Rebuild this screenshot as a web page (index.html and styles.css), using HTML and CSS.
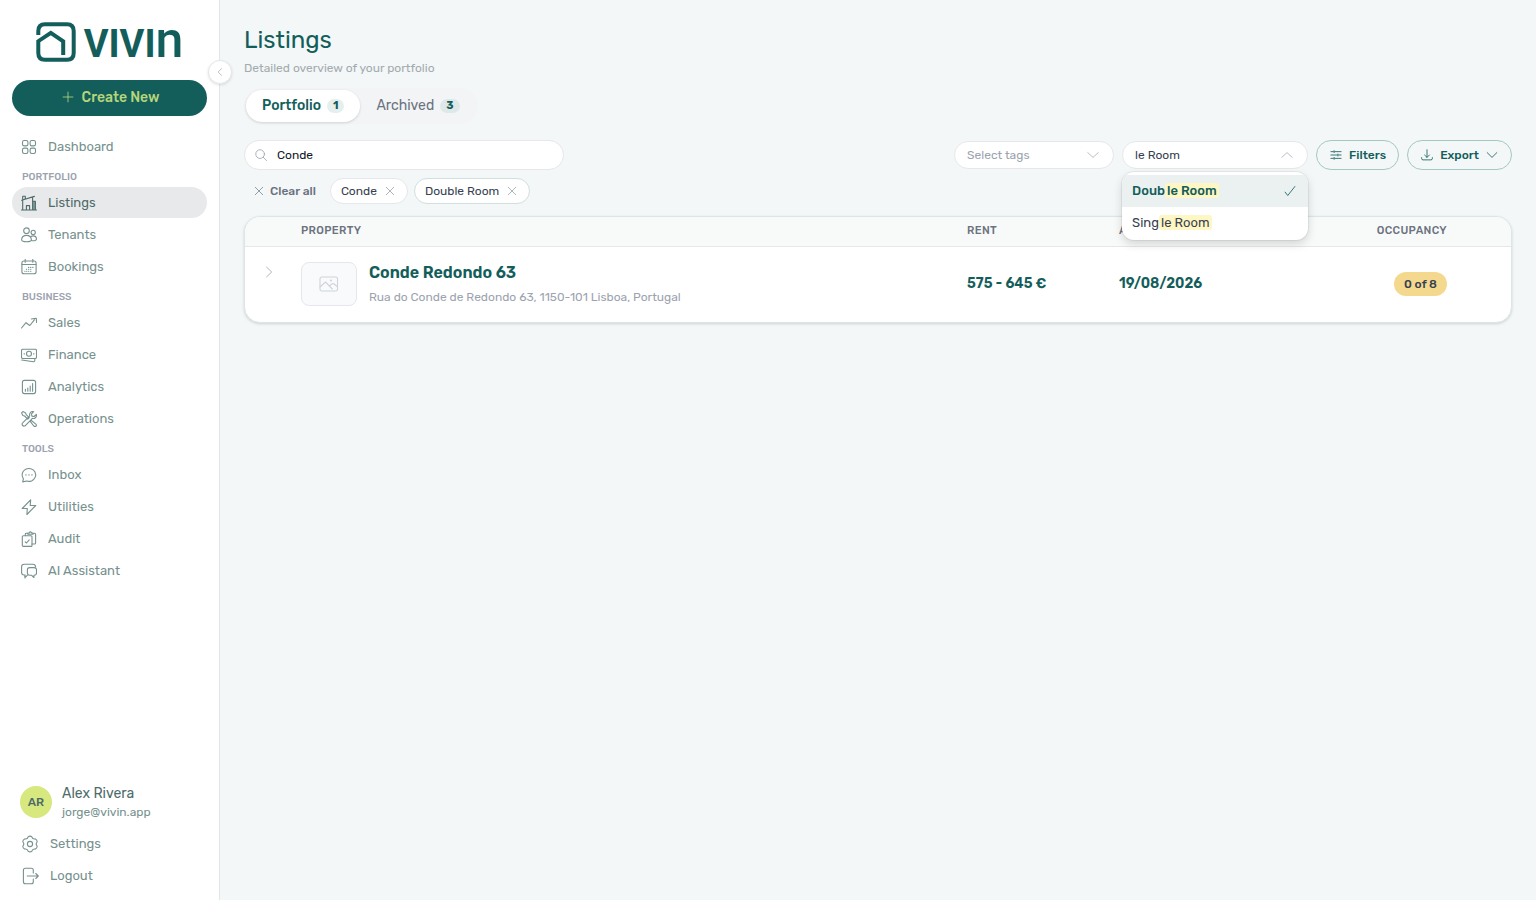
FILE: index.html
```html
<!DOCTYPE html>
<html lang="en">
<head>
  <meta charset="utf-8">
  <meta name="viewport" content="width=device-width, initial-scale=1">
  <title>Listings - Vivin</title>
  <link rel="stylesheet" href="styles.css">
</head>
<body>
  <div class="app">
    <!-- Sidebar -->
    <aside class="sidebar">
      <a class="logo" href="#">
        <svg class="logo-mark" viewBox="0 0 40 40" aria-hidden="true">
          <path d="M2.3 13V9Q2.3 2.3 9 2.3H31Q37.7 2.3 37.7 9V31Q37.7 37.7 31 37.7H9Q2.3 37.7 2.3 31V19.2L14.8 10.8L27.2 19.4V33"/>
        </svg>
        <span class="logo-text">VIVI<span class="logo-n">n</span></span>
      </a>
      <button class="collapse-button" aria-label="Collapse sidebar">
        <svg class="icon icon-xs" viewBox="0 0 16 16"><path d="M10.5 2.5L5 8l5.5 5.5"/></svg>
      </button>

      <button class="create-button">
        <svg class="icon icon-sm" viewBox="0 0 16 16"><path d="M8 1.5v13M1.5 8h13"/></svg>
        Create New
      </button>

      <nav class="nav">
        <a class="nav-item" href="#">
          <svg class="icon" viewBox="0 0 16 16"><rect x="1.5" y="1.5" width="5.4" height="5.4" rx="1.7"/><rect x="9.1" y="1.5" width="5.4" height="5.4" rx="1.7"/><rect x="1.5" y="9.1" width="5.4" height="5.4" rx="1.7"/><rect x="9.1" y="9.1" width="5.4" height="5.4" rx="1.7"/></svg>
          Dashboard
        </a>
        <div class="nav-label">Portfolio</div>
        <a class="nav-item active" href="#">
          <svg class="icon" viewBox="0 0 16 16"><path d="M.5 15h15M1.7 15V4.8M.6 5.3L13.4 1.4M1.7 4.8V1.2h2.6v2.8M11.6 15V2.2M11.6 6.3h2.8V15M13 6.5V15M5.4 15v-4.4h3.2V15"/></svg>
          Listings
        </a>
        <a class="nav-item" href="#">
          <svg class="icon" viewBox="0 0 16 16"><circle cx="5.5" cy="3.7" r="2.8"/><circle cx="12.2" cy="5.4" r="2.1"/><path d="M.6 12.7C.8 10 2.8 8.4 5.5 8.4s4.7 1.6 4.9 4.3c0 1.3-2.1 2-4.9 2s-4.9-.7-4.9-2zM9.9 9.7c.6-.5 1.4-.8 2.3-.8 1.9 0 3.2 1.2 3.3 3.1 0 1.3-1.8 1.9-4.6 1.7"/></svg>
          Tenants
        </a>
        <a class="nav-item" href="#">
          <svg class="icon" viewBox="0 0 16 16"><rect x=".9" y="2" width="14.2" height="12.8" rx="2"/><path d="M1 5.5h14M4.2.5v2.7M11.8.5v2.7M7.5 8.4h.3M9.6 8.4h.3M11.7 8.4h.3M5.4 10.3h.3M7.5 10.3h.3M9.6 10.3h.3M3.8 12.2h.3M5.6 12.2h.3M7.5 12.2h.3M9.6 12.2h.3"/></svg>
          Bookings
        </a>

        <div class="nav-label">Business</div>
        <a class="nav-item" href="#">
          <svg class="icon" viewBox="0 0 16 16"><path d="M.5 13L5 7.7l3.4 2.6q.5.3.9-.3L13.5 4.6M10.3 4l5-.7.3 4.2"/></svg>
          Sales
        </a>
        <a class="nav-item" href="#">
          <svg class="icon" viewBox="0 0 16 16"><rect x=".5" y="2.2" width="15" height="9.3" rx="1.3"/><circle cx="8" cy="6.8" r="2.5"/><path d="M3.2 6.5v.6M12.8 6.5v.6M.7 13l11.8 1.7q1.3.1 1.3-1.4v-1.6"/></svg>
          Finance
        </a>
        <a class="nav-item" href="#">
          <svg class="icon" viewBox="0 0 16 16"><rect x="1.4" y="1.4" width="13.2" height="13.2" rx="2"/><path d="M4.4 12.2v-1.8M6.8 12.2V9M9.2 12.2V7M11.6 12.2V4.6"/></svg>
          Analytics
        </a>
        <a class="nav-item" href="#">
          <svg class="icon" viewBox="0 0 16 16"><path d="M.6 1.9L1.9.6l2.7 1.3.6 1.7 3.1 3.1-1.5 1.5-3.2-3.2-1.7-.6zM10 9.3l4.9 3.8q1 1.3 0 2.1-1 .8-2.1-.2L9 10.2zM12.7.7L10.5 2.9l.4 2.2 2.2.4 2.2-2.2c.7 2.5-1.3 4.7-3.9 4.1L4.6 14.3c-.8.9-2 1.1-2.9.2s-.8-2.1.2-2.9l6.8-6.8C8.1 2.1 10.3 0 12.7.7z"/></svg>
          Operations
        </a>

        <div class="nav-label">Tools</div>
        <a class="nav-item" href="#">
          <svg class="icon" viewBox="0 0 16 16"><path d="M2.4 11.9C.1 8.6.9 4.4 4.3 2.4 7.7.5 12.2 1.5 14 4.9c1.7 3.5.1 7.5-3.5 9-1.6.6-3.2.6-4.7.1L1.7 14.9zM4.8 7.9h.3M7.8 7.9h.3M10.8 7.9h.3"/></svg>
          Inbox
        </a>
        <a class="nav-item" href="#">
          <svg class="icon" viewBox="0 0 16 16"><path d="M9.7.8L1.2 9.5h5.1L5.9 15.5 14.7 6.5H9.2z"/></svg>
          Utilities
        </a>
        <a class="nav-item" href="#">
          <svg class="icon" viewBox="0 0 16 16"><rect x="1.3" y="4.7" width="9.7" height="10.7" rx="1"/><path d="M4.3 4.6V3.2q0-.9.9-.9h1.5M12 2.3h1.5q1.1 0 1.1 1v8.7q0 1-1.1 1h-2.4M6.8 3.3V2h1.3q1.3-2.2 2.6 0H12v1.3zM4.2 10.8l1.3 1.2 2.7-3.2"/></svg>
          Audit
        </a>
        <a class="nav-item" href="#">
          <svg class="icon" viewBox="0 0 16 16"><path d="M3.9 14.9v-2.6M4.3 12H3Q.6 12 .6 9.6V4Q.6 1.2 3.2 1.2h8.7q2.5 0 2.7 2.7M3.9 14.5l2.4-2.2"/><path d="M8.6 4.6h4.6q2.3 0 2.3 2.2v3.2q0 2.2-2.3 2.2h-.3v2.3l-2.5-2.3H8.6q-2.2 0-2.2-2.2V6.8q0-2.2 2.2-2.2z"/></svg>
          AI Assistant
        </a>
      </nav>

      <div class="account">
        <div class="user">
          <div class="avatar">AR</div>
          <div class="user-details">
            <div class="user-name">Alex Rivera</div>
            <div class="user-email">jorge@vivin.app</div>
          </div>
        </div>
        <a class="nav-item" href="#">
          <svg class="icon icon-lg" viewBox="0 0 18 18"><circle cx="9" cy="9" r="2.6"/><path d="M7.2 1.8Q9 .4 10.8 1.8Q11.6 4.4 14.3 3.9Q16.4 4.7 16.1 7Q14.3 9 16.1 11Q16.4 13.3 14.3 14.1Q11.6 13.6 10.8 16.2Q9 17.6 7.2 16.2Q6.4 13.6 3.7 14.1Q1.6 13.3 1.9 11Q3.7 9 1.9 7Q1.6 4.7 3.7 3.9Q6.4 4.4 7.2 1.8z"/></svg>
          Settings
        </a>
        <a class="nav-item" href="#">
          <svg class="icon icon-lg" viewBox="0 0 18 18"><path d="M12.3 6V3.2q0-2-2-2H4.4q-2 0-2 2v11.6q0 2 2 2h5.900q2 0 2-2V12M6.3 9h11M14.8 6.5L17.3 9l-2.5 2.5"/></svg>
          Logout
        </a>
      </div>
    </aside>

    <!-- Main content -->
    <main class="main">
      <h1 class="title">Listings</h1>
      <p class="subtitle">Detailed overview of your portfolio</p>

      <div class="tabs">
        <button class="tab active">Portfolio <span class="count">1</span></button>
        <button class="tab">Archived <span class="count">3</span></button>
      </div>

      <div class="toolbar">
        <label class="search">
          <svg class="icon icon-sm" viewBox="0 0 16 16"><circle cx="6.8" cy="6.8" r="5.8"/><path d="M11 11l4.5 4.5"/></svg>
          <input type="text" value="Conde" aria-label="Search listings">
        </label>

        <div class="toolbar-actions">
          <div class="field field-tags">
            <select aria-label="Tags">
              <option>Select tags</option>
            </select>
            <svg class="icon icon-sm" viewBox="0 0 16 16"><path d="M1 4.8l7 6.4 7-6.4"/></svg>
          </div>

          <div class="field field-type">
            <input type="text" value="le Room" aria-label="Room type">
            <svg class="icon icon-sm" viewBox="0 0 16 16"><path d="M1 11.2l7-6.4 7 6.4"/></svg>
            <div class="menu">
              <button class="option selected">
                <span>Doub<mark>le Room</mark></span>
                <svg class="icon icon-sm" viewBox="0 0 16 16"><path d="M1.5 9.5L5 14 14.5 2"/></svg>
              </button>
              <button class="option"><span>Sing<mark>le Room</mark></span></button>
            </div>
          </div>

          <button class="button-outline">
            <svg class="icon icon-sm" viewBox="0 0 16 16"><path d="M1.2 3.5h3.3M6.5 3.5h8.3M1.2 8h8.3M11.5 8h3.3M1.2 12.5h3.3M6.5 12.5h8.3M5.5 2.2v2.6M10.5 6.7v2.6M5.5 11.2v2.6"/></svg>
            Filters
          </button>
          <button class="button-outline button-menu">
            <svg class="icon icon-sm" viewBox="0 0 16 16"><path d="M8 1v10M4.8 8L8 11.2 11.2 8M.8 11.5v1q0 2 2 2h10.4q2 0 2-2v-1"/></svg>
            Export
            <svg class="icon icon-sm" viewBox="0 0 16 16"><path d="M1.5 4.8L8 11.2l6.5-6.4"/></svg>
          </button>
        </div>
      </div>

      <div class="chips">
        <button class="clear-button">
          <svg class="icon icon-xs" viewBox="0 0 16 16"><path d="M2 2l12 12M14 2L2 14"/></svg>
          Clear all
        </button>
        <button class="chip">
          Conde
          <svg class="icon icon-xs" viewBox="0 0 16 16"><path d="M2 2l12 12M14 2L2 14"/></svg>
        </button>
        <button class="chip chip-filter">
          Double Room
          <svg class="icon icon-xs" viewBox="0 0 16 16"><path d="M2 2l12 12M14 2L2 14"/></svg>
        </button>
      </div>

      <div class="card">
        <table class="listings">
          <thead>
            <tr>
              <th class="col-toggle"></th>
              <th>Property</th>
              <th class="col-rent">Rent</th>
              <th class="col-date">Availability</th>
              <th class="col-occupancy">Occupancy</th>
              <th class="col-actions"></th>
            </tr>
          </thead>
          <tbody>
            <tr>
              <td class="col-toggle">
                <button class="expand-button" aria-label="Expand property">
                  <svg class="icon icon-sm" viewBox="0 0 16 16"><path d="M4.8 1.5L11.5 8l-6.7 6.5"/></svg>
                </button>
              </td>
              <td>
                <div class="property">
                  <div class="thumb">
                    <svg class="icon" viewBox="0 0 20 16"><rect x="1" y="1" width="17.5" height="14" rx="1.8"/><path d="M1 11l5.5-5 6.8 7M10.5 10.2q2-3.2 4.2-2.4l3.8 3"/><circle cx="12" cy="4.5" r=".5"/></svg>
                  </div>
                  <div>
                    <a class="property-name" href="#">Conde Redondo 63</a>
                    <div class="property-address">Rua do Conde de Redondo 63, 1150-101 Lisboa, Portugal</div>
                  </div>
                </div>
              </td>
              <td class="value">575 - 645 €</td>
              <td class="value">19/08/2026</td>
              <td class="col-occupancy"><span class="badge">0 of 8</span></td>
              <td></td>
            </tr>
          </tbody>
        </table>
      </div>
    </main>
  </div>
</body>
</html>
```

FILE: styles.css
```css
* {
  box-sizing: border-box;
}
body {
  margin: 0;
  font-family: Rubik, Roboto, sans-serif;
  font-size: 13px;
  color: #374151;
  background-color: #f3f7f8;
}
a {
  color: inherit;
  text-decoration: none;
}
button,
input,
select {
  font: inherit;
  color: inherit;
  border: none;
  background: none;
  padding: 0;
  margin: 0;
  outline: none;
}
button {
  cursor: pointer;
}
.icon {
  width: 16px;
  height: 16px;
  flex-shrink: 0;
  fill: none;
  stroke: currentColor;
  stroke-width: 1.1;
  stroke-linecap: round;
  stroke-linejoin: round;
}
.icon-xs {
  width: 10px;
  height: 10px;
}
.icon-sm {
  width: 12px;
  height: 12px;
}
.icon-lg {
  width: 18px;
  height: 18px;
}
.app {
  display: flex;
  min-height: 100vh;
}

/* Sidebar */
.sidebar {
  position: relative;
  display: flex;
  flex-direction: column;
  flex-shrink: 0;
  width: 220px;
  padding: 22px 12px 9px;
  background-color: white;
  border-right: 1px solid #e2e6ea;
}
.logo {
  display: flex;
  justify-content: center;
  align-items: center;
  gap: 8px;
  height: 40px;
  color: #135e5b;
}
.logo-mark {
  width: 40px;
  height: 40px;
  fill: none;
  stroke: currentColor;
  stroke-width: 4;
}
.logo-text {
  font-family: Roboto, sans-serif;
  font-size: 38px;
  font-weight: 700;
  line-height: 40px;
}
.logo-n {
  font-size: 50px;
  font-weight: 500;
  line-height: 40px;
}
.collapse-button {
  position: absolute;
  top: 60px;
  right: -13px;
  display: flex;
  align-items: center;
  justify-content: center;
  width: 24px;
  height: 24px;
  border: 1px solid #e5e7eb;
  border-radius: 50%;
  background-color: white;
  color: #9ca3af;
  box-shadow: 0 1px 3px rgba(0, 0, 0, 0.12);
}
.create-button {
  display: flex;
  align-items: center;
  justify-content: center;
  gap: 8px;
  height: 36px;
  margin-top: 18px;
  padding: 0 0 2px 2px;
  border-radius: 18px;
  background-color: #135e5b;
  color: #b5d67a;
  font-size: 14px;
  font-weight: 500;
}
.nav {
  display: flex;
  flex-direction: column;
  gap: 1px;
  margin-top: 15px;
}
.nav-item {
  display: flex;
  align-items: center;
  gap: 11px;
  height: 31px;
  padding: 0 9px;
  border-radius: 16px;
  color: #76918e;
}
.nav-item.active {
  background-color: #e8e9eb;
  color: #4d6b69;
}
.nav-label {
  height: 23px;
  padding: 6px 10px 0;
  font-size: 10px;
  font-weight: 500;
  line-height: 16px;
  text-transform: uppercase;
  color: #9ca3af;
}
.account {
  display: flex;
  flex-direction: column;
  gap: 1px;
  margin-top: auto;
}
.user {
  display: flex;
  align-items: center;
  gap: 10px;
  padding: 0 8px;
  margin-bottom: 6px;
}
.avatar {
  width: 32px;
  height: 32px;
  border-radius: 50%;
  background-color: #d6e87e;
  color: #4d6b69;
  font-size: 12px;
  font-weight: 500;
  line-height: 32px;
  text-align: center;
}
.user-details {
  padding-top: 2px;
}
.user-name {
  font-size: 14px;
  line-height: 19px;
  color: #4d6b69;
}
.user-email {
  font-size: 12px;
  line-height: 18px;
  color: #76918e;
}

/* Main content */
.main {
  flex: 1;
  min-width: 0;
  padding: 24px;
}
.title {
  margin: 0;
  font-size: 24px;
  font-weight: 400;
  line-height: 32px;
  color: #135e5b;
}
.subtitle {
  margin: 4px 0 0;
  font-size: 12px;
  line-height: 16px;
  color: #a3abae;
}
.tabs {
  display: flex;
  width: fit-content;
  margin-top: 12px;
  padding: 2px;
  border-radius: 18px;
  background-color: #f3f4f6;
}
.tab {
  display: flex;
  align-items: center;
  gap: 6px;
  height: 32px;
  padding: 0 16px 2px;
  border-radius: 16px;
  font-size: 14px;
  color: #6b7280;
}
.tab.active {
  background-color: white;
  color: #135e5b;
  font-weight: 500;
  box-shadow: 0 1px 3px rgba(0, 0, 0, 0.15);
}
.count {
  margin-top: 2px;
  padding: 0 6px;
  border-radius: 7px;
  background-color: #dfe8e8;
  color: #135e5b;
  font-size: 11px;
  font-weight: 700;
  line-height: 14px;
}
.tab.active .count {
  background-color: #e7efee;
}
.toolbar {
  display: flex;
  justify-content: space-between;
  align-items: center;
  gap: 16px;
  margin-top: 16px;
}
.search {
  display: flex;
  align-items: center;
  gap: 10px;
  width: 320px;
  height: 30px;
  padding: 0 10px;
  border: 1px solid #e5e7eb;
  border-radius: 15px;
  background-color: white;
  color: #9ca3af;
}
.search input {
  flex: 1;
  min-width: 0;
  font-size: 12px;
  color: #111827;
}
.toolbar-actions {
  display: flex;
  align-items: center;
  gap: 8px;
}
.field {
  position: relative;
  display: flex;
  align-items: center;
  height: 28px;
  padding: 0 14px 0 12px;
  border: 1px solid #e5e7eb;
  border-radius: 14px;
  background-color: white;
  color: #a9b0ba;
}
.field-tags {
  width: 160px;
}
.field-type {
  width: 186px;
}
.field select,
.field input {
  flex: 1;
  min-width: 0;
  font-size: 12px;
}
.field select {
  appearance: none;
  color: #9ca3af;
}
.field input {
  color: #374151;
}
.menu {
  position: absolute;
  top: 30px;
  left: -1px;
  right: -1px;
  z-index: 5;
  overflow: hidden;
  padding: 3px 0 1px;
  border-radius: 12px;
  background-color: white;
  box-shadow: 0 0 0 1px rgba(0, 0, 0, 0.05), 0 4px 10px rgba(0, 0, 0, 0.15);
}
.option {
  display: flex;
  justify-content: space-between;
  align-items: center;
  width: 100%;
  height: 32px;
  padding: 0 12px 1px 10px;
  font-size: 13px;
  color: #374151;
}
.option.selected {
  background-color: #ebf1f1;
  color: #135e5b;
  font-weight: 500;
}
mark {
  padding: 0 2px;
  border-radius: 3px;
  background-color: #fef6c3;
  color: inherit;
}
.button-outline {
  display: flex;
  align-items: center;
  gap: 7px;
  height: 30px;
  padding: 0 12px 0 13px;
  border: 1px solid #a5c8c2;
  border-radius: 15px;
  color: #135e5b;
  font-size: 12px;
  font-weight: 500;
}
.button-menu {
  padding-right: 13px;
}
.chips {
  display: flex;
  align-items: center;
  gap: 6px;
  margin-top: 8px;
  font-size: 12px;
}
.clear-button {
  display: flex;
  align-items: center;
  gap: 6px;
  padding: 0 8px 0 10px;
  color: #6b7280;
  font-weight: 500;
}
.chip {
  display: flex;
  align-items: center;
  gap: 8px;
  height: 26px;
  padding: 0 12px 0 10px;
  border: 1px solid #e5e7eb;
  border-radius: 13px;
  background-color: white;
  color: #374151;
}
.chip-filter {
  border-color: #cfe0dd;
}
.chip .icon {
  color: #8b929d;
}

/* Listings table */
.card {
  overflow: hidden;
  margin-top: 12px;
  border: 1px solid #dce6e6;
  border-radius: 16px;
  background-color: white;
  box-shadow: 0 1px 3px rgba(0, 0, 0, 0.15);
}
.listings {
  width: 100%;
  border-collapse: collapse;
  table-layout: fixed;
}
.listings th {
  height: 29px;
  padding: 0 12px 1px;
  border-bottom: 1px solid #e5e7eb;
  background-color: #f8faf9;
  color: #6b7280;
  font-size: 11px;
  font-weight: 500;
  letter-spacing: 0.03em;
  text-align: left;
  text-transform: uppercase;
}
.listings td {
  height: 76px;
  padding: 0 12px 1px;
}
.listings .col-toggle {
  width: 44px;
  padding: 0 0 0 18px;
}
.col-rent,
.col-date {
  width: 152px;
}
.listings .col-occupancy {
  width: 200px;
  text-align: right;
}
.col-actions {
  width: 52px;
}
.expand-button {
  display: flex;
  margin-bottom: 24px;
  color: #9ca3af;
}
.property {
  display: flex;
  align-items: center;
  gap: 12px;
}
.thumb {
  display: flex;
  align-items: center;
  justify-content: center;
  width: 56px;
  height: 44px;
  border: 1px solid #e5e7eb;
  border-radius: 8px;
  background-color: #f9fafb;
  color: #cfd4da;
}
.thumb .icon {
  width: 20px;
}
.property-name {
  display: block;
  font-size: 16px;
  font-weight: 600;
  line-height: 24px;
  color: #135e5b;
}
.property-address {
  margin-top: 3px;
  font-size: 12px;
  line-height: 18px;
  color: #9ca3af;
}
.listings .value {
  font-size: 14px;
  font-weight: 600;
  color: #135e5b;
}
.badge {
  display: inline-block;
  padding: 0 10px;
  border-radius: 12px;
  background-color: #f4d88d;
  color: #374151;
  font-size: 12px;
  font-weight: 500;
  line-height: 24px;
}
```
